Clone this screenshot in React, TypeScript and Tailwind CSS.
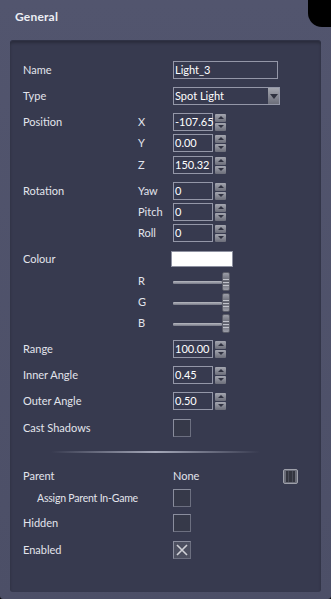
import type { ReactNode } from "react";

const label = "whitespace-nowrap text-[11px] leading-[16px] text-[#e2e4ec]";

function Row({ className = "", children }: { className?: string; children: ReactNode }) {
  return <div className={`flex h-[20px] items-center ${className}`}>{children}</div>;
}

function Main({ children }: { children?: ReactNode }) {
  return <div className={`w-[115px] shrink-0 ${label}`}>{children}</div>;
}

function Sub({ children }: { children?: ReactNode }) {
  return <div className={`w-[35px] shrink-0 ${label}`}>{children}</div>;
}

function Arrow({ up }: { up?: boolean }) {
  return (
    <div className="flex flex-1 items-center justify-center rounded-[1px] bg-gradient-to-b from-[#a4a6b0] to-[#6c6e7a]">
      {up ? (
        <span className="h-0 w-0 border-x-[3px] border-b-[3px] border-x-transparent border-b-[#2f3140]" />
      ) : (
        <span className="h-0 w-0 border-x-[3px] border-t-[3px] border-x-transparent border-t-[#2f3140]" />
      )}
    </div>
  );
}

function Spin({ value }: { value: string }) {
  return (
    <div className="flex items-center gap-[2px]">
      <div className="flex h-[18px] w-[40px] items-center border border-[#9497a8] bg-[#373a4f] pl-[1px] text-[11px] text-white">
        {value}
      </div>
      <div className="flex h-[17px] w-[11px] flex-col gap-[1px]">
        <Arrow up />
        <Arrow />
      </div>
    </div>
  );
}

function Check({ checked }: { checked?: boolean }) {
  return (
    <div
      className={`flex h-[18px] w-[18px] items-center justify-center border border-t-[#8a8d9d] border-l-[#8a8d9d] border-r-[#6c6f80] border-b-[#6c6f80] ${
        checked ? "bg-[#4c4f60]" : "bg-[#363949]"
      }`}
    >
      {checked && (
        <svg width="12" height="12" viewBox="0 0 12 12">
          <path d="M1 1 L11 11 M11 1 L1 11" stroke="#cfd0d6" strokeWidth="1.6" />
        </svg>
      )}
    </div>
  );
}

function Slider() {
  return (
    <div className="flex h-[20px] w-[57px] items-center">
      <div className="mt-[3px] h-[3px] w-[49px] rounded-[1px] bg-gradient-to-b from-[#b8bac2] to-[#777987]" />
      <div className="flex h-[19px] w-[8px] flex-col overflow-hidden rounded-[2px] border border-[#5a5c68] bg-gradient-to-b from-[#9c9ea8] via-[#5e606c] to-[#9c9ea8]">
        <div className="mt-[6px] h-[1px] bg-[#c0c2ca]" />
        <div className="mt-[2px] h-[1px] bg-[#c0c2ca]" />
        <div className="mt-[2px] h-[1px] bg-[#c0c2ca]" />
      </div>
    </div>
  );
}

export default function App() {
  return (
    <div className="min-h-[599px] bg-black font-['Lato','Open_Sans',sans-serif]">
      <div className="flex min-h-[599px] flex-col rounded-bl-[3px] rounded-br-[3px] bg-gradient-to-b from-[#52556e] to-[#4c4f67] px-[10px] pb-[7px] text-white">
        <div className="-mx-[10px] flex h-[40px] items-start">
          <div className="mt-[9px] flex-1 pl-[15px] text-[12px] font-bold leading-[16px] tracking-[0.2px] text-[#eceef4]">
            General
          </div>
          <div className="h-[27px] w-[23px] rounded-bl-[14px] bg-black" />
        </div>
        <div className="flex flex-1 flex-col rounded-[3px] border-t border-[#2f3245] bg-[#373a4f] pl-[13px] pt-[19px] shadow-[inset_0_2px_3px_rgba(0,0,0,0.25)]">
          <Row>
            <Main>Name</Main>
            <Sub />
            <div className="flex h-[18px] w-[105px] items-center border border-[#9497a8] pl-[1px] text-[11px] text-white">
              Light_3
            </div>
          </Row>
          <Row className="mt-[6px]">
            <Main>Type</Main>
            <Sub />
            <div className="flex h-[18px] w-[107px] items-center border border-[#9497a8] pl-[1px] text-[11px] text-white">
              <span className="flex-1">Spot Light</span>
              <div className="flex h-[16px] w-[11px] items-center justify-center bg-gradient-to-b from-[#a4a6b0] to-[#6c6e7a]">
                <span className="h-0 w-0 border-x-[4px] border-t-[5px] border-x-transparent border-t-[#2f3140]" />
              </div>
            </div>
          </Row>
          <Row className="mt-[6px]">
            <Main>Position</Main>
            <Sub>X</Sub>
            <Spin value="-107.65" />
          </Row>
          <Row className="mt-[1px]">
            <Main />
            <Sub>Y</Sub>
            <Spin value="0.00" />
          </Row>
          <Row className="mt-[2px]">
            <Main />
            <Sub>Z</Sub>
            <Spin value="150.32" />
          </Row>
          <Row className="mt-[6px]">
            <Main>Rotation</Main>
            <Sub>Yaw</Sub>
            <Spin value="0" />
          </Row>
          <Row className="mt-[1px]">
            <Main />
            <Sub>Pitch</Sub>
            <Spin value="0" />
          </Row>
          <Row className="mt-[1px]">
            <Main />
            <Sub>Roll</Sub>
            <Spin value="0" />
          </Row>
          <Row className="mt-[6px]">
            <Main>Colour</Main>
            <Sub />
            <div className="-ml-[2px] h-[16px] w-[62px] border border-[#8d90a0] bg-white" />
          </Row>
          <Row className="mt-[2px]">
            <Main />
            <Sub>R</Sub>
            <Slider />
          </Row>
          <Row className="mt-[1px]">
            <Main />
            <Sub>G</Sub>
            <Slider />
          </Row>
          <Row className="mt-[1px]">
            <Main />
            <Sub>B</Sub>
            <Slider />
          </Row>
          <Row className="mt-[6px]">
            <Main>Range</Main>
            <Sub />
            <Spin value="100.00" />
          </Row>
          <Row className="mt-[6px]">
            <Main>Inner Angle</Main>
            <Sub />
            <Spin value="0.45" />
          </Row>
          <Row className="mt-[6px]">
            <Main>Outer Angle</Main>
            <Sub />
            <Spin value="0.50" />
          </Row>
          <Row className="mt-[7px]">
            <Main>Cast Shadows</Main>
            <Sub />
            <Check />
          </Row>
          <div className="ml-[28px] mt-[13px] h-[2px] w-[209px] rounded-full bg-gradient-to-r from-transparent via-[#a4a7b8] to-transparent" />
          <Row className="mt-[13px]">
            <Main>Parent</Main>
            <Sub />
            <div className={`w-[110px] ${label}`}>None</div>
            <div className="flex h-[15px] w-[15px] items-center justify-center rounded-[2px] border border-[#9ea0aa] bg-[#6a6c78]">
              <div className="flex h-[11px] w-[9px] justify-evenly bg-[#33353f]">
                <span className="w-px bg-[#4a4c58]" />
                <span className="w-px bg-[#4a4c58]" />
              </div>
            </div>
          </Row>
          <Row className="mt-[2px]">
            <Main>
              <span className="pl-[14px] text-[10.5px] tracking-[-0.2px]">Assign Parent In-Game</span>
            </Main>
            <Sub />
            <Check />
          </Row>
          <Row className="mt-[5px]">
            <Main>Hidden</Main>
            <Sub />
            <Check />
          </Row>
          <Row className="mt-[7px]">
            <Main>Enabled</Main>
            <Sub />
            <Check checked />
          </Row>
        </div>
      </div>
    </div>
  );
}
